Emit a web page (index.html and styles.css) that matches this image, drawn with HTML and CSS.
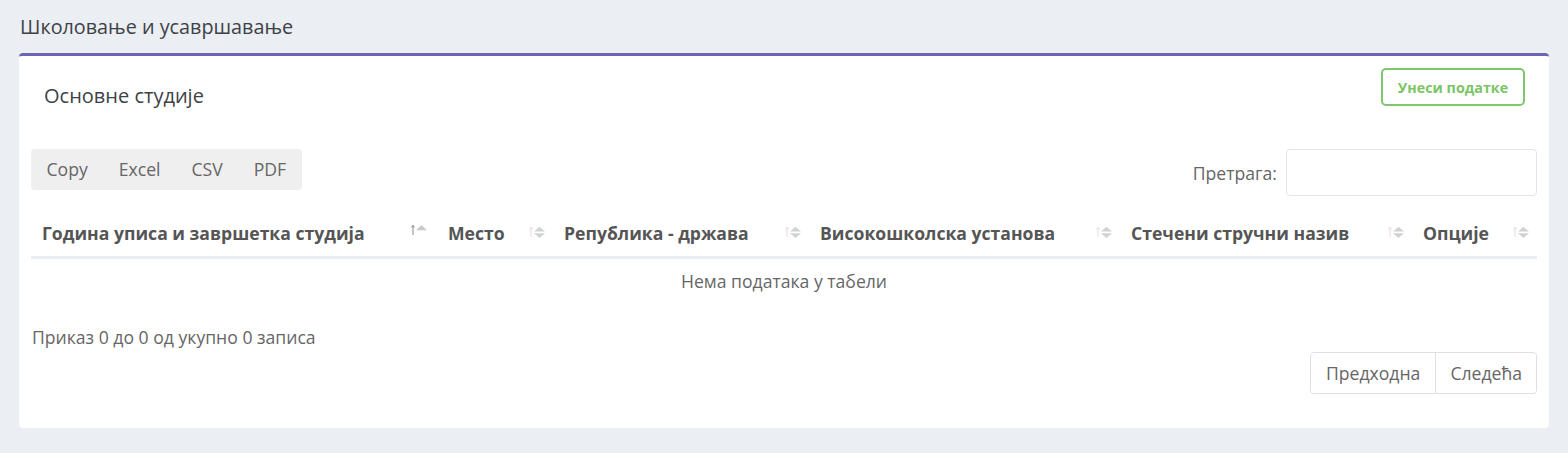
FILE: index.html
```html
<!DOCTYPE html>
<html lang="sr">
<head>
<meta charset="utf-8">
<title>Школовање и усавршавање</title>
<link rel="stylesheet" href="styles.css">
</head>
<body>
<div class="page">
  <h1 class="page-title">Школовање и усавршавање</h1>
  <div class="card">
    <div class="card-header">
      <h2 class="card-title">Основне студије</h2>
      <button class="btn-add">Унеси податке</button>
    </div>
    <div class="card-body">
      <div class="toolbar">
        <div class="btn-group">
          <button class="tool-btn">Copy</button>
          <button class="tool-btn">Excel</button>
          <button class="tool-btn">CSV</button>
          <button class="tool-btn">PDF</button>
        </div>
        <label class="search">Претрага: <input class="search-input" type="text"></label>
      </div>
      <table class="table">
        <colgroup>
          <col class="c1"><col class="c2"><col class="c3"><col class="c4"><col class="c5"><col class="c6">
        </colgroup>
        <thead>
          <tr>
            <th><span>Година уписа и завршетка студија</span>
              <svg class="sort" width="18" height="13" viewBox="0 0 18 13"><path d="M3 1.5V11" stroke="#8a8a8a" stroke-width="1"/><path d="M1.4 3.4L3 1.3L4.6 3.4" fill="none" stroke="#8a8a8a" stroke-width="1"/><path d="M6 6.2L11.5 1.2L17 6.2Z" fill="#c9c9c9"/></svg></th>
            <th><span>Место</span>
              <svg class="sort" width="18" height="13" viewBox="0 0 18 13"><path d="M3 1.5V11" stroke="#f0d8d8" stroke-width="1"/><path d="M1.4 3.4L3 1.3L4.6 3.4" fill="none" stroke="#f0d8d8" stroke-width="1"/><path d="M6 5.6L11.5 0.8L17 5.6Z" fill="#d2d2d2"/><path d="M6 7.2L11.5 12L17 7.2Z" fill="#d2d2d2"/></svg></th>
            <th><span>Република - држава</span>
              <svg class="sort" width="18" height="13" viewBox="0 0 18 13"><path d="M3 1.5V11" stroke="#f0d8d8" stroke-width="1"/><path d="M1.4 3.4L3 1.3L4.6 3.4" fill="none" stroke="#f0d8d8" stroke-width="1"/><path d="M6 5.6L11.5 0.8L17 5.6Z" fill="#d2d2d2"/><path d="M6 7.2L11.5 12L17 7.2Z" fill="#d2d2d2"/></svg></th>
            <th><span>Високошколска установа</span>
              <svg class="sort" width="18" height="13" viewBox="0 0 18 13"><path d="M3 1.5V11" stroke="#f0d8d8" stroke-width="1"/><path d="M1.4 3.4L3 1.3L4.6 3.4" fill="none" stroke="#f0d8d8" stroke-width="1"/><path d="M6 5.6L11.5 0.8L17 5.6Z" fill="#d2d2d2"/><path d="M6 7.2L11.5 12L17 7.2Z" fill="#d2d2d2"/></svg></th>
            <th><span>Стечени стручни назив</span>
              <svg class="sort" width="18" height="13" viewBox="0 0 18 13"><path d="M3 1.5V11" stroke="#f0d8d8" stroke-width="1"/><path d="M1.4 3.4L3 1.3L4.6 3.4" fill="none" stroke="#f0d8d8" stroke-width="1"/><path d="M6 5.6L11.5 0.8L17 5.6Z" fill="#d2d2d2"/><path d="M6 7.2L11.5 12L17 7.2Z" fill="#d2d2d2"/></svg></th>
            <th><span>Опције</span>
              <svg class="sort" width="18" height="13" viewBox="0 0 18 13"><path d="M3 1.5V11" stroke="#f0d8d8" stroke-width="1"/><path d="M1.4 3.4L3 1.3L4.6 3.4" fill="none" stroke="#f0d8d8" stroke-width="1"/><path d="M6 5.6L11.5 0.8L17 5.6Z" fill="#d2d2d2"/><path d="M6 7.2L11.5 12L17 7.2Z" fill="#d2d2d2"/></svg></th>
          </tr>
        </thead>
        <tbody>
          <tr><td class="empty" colspan="6">Нема података у табели</td></tr>
        </tbody>
      </table>
      <div class="info">Приказ 0 до 0 од укупно 0 записа</div>
      <div class="pager">
        <div class="pagination">
          <button class="page-btn">Предходна</button>
          <button class="page-btn">Следећа</button>
        </div>
      </div>
    </div>
  </div>
</div>
</body>
</html>
```

FILE: styles.css
```css
* { box-sizing: border-box; }
html, body { margin: 0; padding: 0; }
body {
  background: #ebeef2;
  font-family: "Open Sans", "Liberation Sans", sans-serif;
  color: #666;
}
.page { padding: 12px 19px 0 19px; }
.page-title {
  margin: 0 0 0 1px;
  font-size: 19.8px;
  font-weight: 400;
  line-height: 30px;
  color: #3d4247;
  height: 41px;
}
.card {
  background: #fff;
  border-top: 3px solid #6d64b3;
  border-radius: 4px;
  height: 375px;
  box-shadow: 0 1px 2px rgba(0,0,0,0.04);
}
.card-header {
  display: flex;
  justify-content: space-between;
  align-items: flex-start;
  padding: 12px 24px 0 25px;
  height: 93px;
}
.card-title {
  margin: 14px 0 0 0;
  font-size: 20px;
  font-weight: 400;
  line-height: 28px;
  color: #3d4247;
}
.btn-add {
  font-family: inherit;
  font-size: 14.3px;
  font-weight: 700;
  color: #7cc468;
  background: #fff;
  border: 2px solid #7cc86a;
  border-radius: 5px;
  width: 144px;
  height: 38px;
  padding: 0;
  cursor: pointer;
}
.card-body { padding: 0 12px; }
.toolbar {
  display: flex;
  justify-content: space-between;
  align-items: flex-start;
  height: 61px;
}
.btn-group {
  display: flex;
  background: #efefef;
  border-radius: 4px;
  height: 41px;
}
.tool-btn {
  font-family: inherit;
  font-size: 17.6px;
  color: #666;
  background: transparent;
  border: 0;
  padding: 0 15.5px;
  height: 41px;
  line-height: 41px;
}
.search {
  display: flex;
  align-items: center;
  font-size: 17.6px;
  color: #666;
  gap: 9px;
}
.search-input {
  width: 251px;
  height: 47px;
  border: 1px solid #e2e4e7;
  border-radius: 4px;
  font-family: inherit;
  font-size: 16px;
}
.table {
  width: 100%;
  border-collapse: collapse;
  table-layout: fixed;
}
.c1 { width: 406px; }
.c2 { width: 116px; }
.c3 { width: 256px; }
.c4 { width: 311px; }
.c5 { width: 292px; }
.c6 { width: auto; }
.table th {
  height: 47px;
  padding: 0 7px 0 11px;
  text-align: left;
  font-size: 17.6px;
  font-weight: 700;
  color: #555;
  border-bottom: 3px solid #eaedf1;
  white-space: nowrap;
}
.table th span { display: inline-block; }
.table th .sort { float: right; margin-top: 5px; }
.table th:first-child .sort { margin-top: 3px; margin-right: 2px; }
.empty {
  text-align: center;
  height: 46px;
  font-size: 17.6px;
  color: #666;
  padding: 0;
}
.info {
  margin-top: 21px;
  margin-left: 1px;
  font-size: 17.6px;
  line-height: 26px;
  color: #666;
}
.pager {
  display: flex;
  justify-content: flex-end;
  margin-top: 2px;
}
.pagination {
  display: flex;
  border: 1px solid #e0e0e0;
  border-radius: 4px;
  height: 42px;
}
.page-btn {
  font-family: inherit;
  font-size: 17.6px;
  color: #666;
  background: #fff;
  border: 0;
  padding: 0 15px;
  border-radius: 4px;
}
.page-btn + .page-btn { border-left: 1px solid #e0e0e0; border-radius: 0 4px 4px 0; padding: 0 14px; }
```
